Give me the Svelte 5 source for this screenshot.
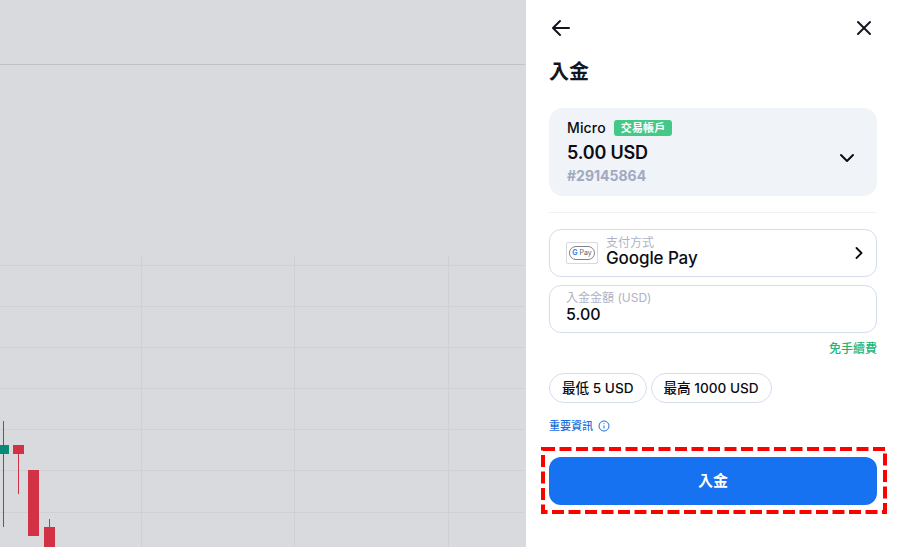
<script lang="ts">
  const hLines = [265, 306, 347, 388, 429, 470, 512];
  const vLines = [141, 294, 448];
  const limits = ['最低 5 USD', '最高 1000 USD'];
</script>

<div class="page">
  <div class="chart">
    <svg width="525" height="547" viewBox="0 0 525 547" aria-hidden="true">
      <line x1="0" y1="64.5" x2="525" y2="64.5" class="edge" />
      {#each hLines as y}
        <line x1="0" y1={y + 0.5} x2="525" y2={y + 0.5} class="grid" />
      {/each}
      {#each vLines as x}
        <line x1={x + 0.5} y1="256" x2={x + 0.5} y2="547" class="grid" />
      {/each}
      <rect x="3" y="421" width="1" height="106" fill="#0e7f73" />
      <rect x="0" y="445" width="9" height="9" fill="#0a8a76" />
      <rect x="13" y="445" width="11" height="9" fill="#d13246" />
      <rect x="18" y="454" width="1" height="40" fill="#d13246" />
      <rect x="28" y="470" width="11" height="66" fill="#d13246" />
      <rect x="49" y="519" width="1" height="8" fill="#d13246" />
      <rect x="44" y="527" width="11" height="20" fill="#d13246" />
    </svg>
  </div>

  <aside class="panel">
    <header class="nav">
      <svg class="icon" width="24" height="24" viewBox="0 0 24 24" fill="none" stroke="#14161f" stroke-width="2" stroke-linecap="round" stroke-linejoin="round" aria-hidden="true"><path d="M20 12H5"/><path d="M11 5l-7 7 7 7"/></svg>
      <svg class="icon" width="24" height="24" viewBox="0 0 24 24" fill="none" stroke="#14161f" stroke-width="2" stroke-linecap="round" aria-hidden="true"><path d="M6 6l12 12"/><path d="M18 6L6 18"/></svg>
    </header>

    <h1>入金</h1>

    <section class="account">
      <div class="account-info">
        <div class="account-name">Micro <span class="tag">交易帳戶</span></div>
        <div class="balance">5.00 USD</div>
        <div class="account-id">#29145864</div>
      </div>
      <svg width="18" height="18" viewBox="0 0 18 18" fill="none" stroke="#0b0d14" stroke-width="2" stroke-linecap="round" stroke-linejoin="round" aria-hidden="true"><path d="M3 6l6 6 6-6"/></svg>
    </section>

    <div class="divider"></div>

    <button type="button" class="field method">
      <span class="gpay">
        <span class="gpay-pill"><span class="g">G</span> Pay</span>
      </span>
      <span class="field-text">
        <span class="label">支付方式</span>
        <span class="value wide">Google Pay</span>
      </span>
      <svg width="16" height="16" viewBox="0 0 16 16" fill="none" stroke="#0b0d14" stroke-width="1.8" stroke-linecap="round" stroke-linejoin="round" aria-hidden="true"><path d="M5.5 3L10.5 8 5.5 13"/></svg>
    </button>

    <div class="field amount">
      <span class="label">入金金額 (USD)</span>
      <span class="value">5.00</span>
    </div>

    <div class="fee">免手續費</div>

    <div class="limits">
      {#each limits as limit}
        <span class="limit">{limit}</span>
      {/each}
    </div>

    <div class="info">
      重要資訊
      <svg width="12" height="12" viewBox="0 0 12 12" fill="none" stroke="#1a6fe0" aria-hidden="true"><circle cx="6" cy="6" r="5"/><path d="M6 5.5v3M6 3.2v1"/></svg>
    </div>

    <div class="submit-wrap">
      <button type="button" class="submit">入金</button>
      <svg class="highlight" width="346" height="67" viewBox="0 0 346 67" aria-hidden="true">
        <rect x="2" y="2" width="342" height="63" fill="none" stroke="#f00" stroke-width="4" stroke-dasharray="12 4.5" />
      </svg>
    </div>
  </aside>
</div>

<style>
  :global(body) {
    margin: 0;
    background: #fff;
  }
  .page {
    display: flex;
    width: 900px;
    height: 547px;
    overflow: hidden;
    font-family: Inter, "Noto Sans CJK TC", sans-serif;
    color: #0b0d14;
  }
  .chart {
    flex: 0 0 526px;
    height: 547px;
    background: #d9dadd;
  }
  .chart svg {
    display: block;
  }
  .edge {
    stroke: #bfc3c9;
  }
  .grid {
    stroke: #cfd0d4;
  }
  .panel {
    flex: 1;
    min-width: 0;
    box-sizing: border-box;
    padding: 16px 23px 0;
    background: #fff;
    display: flex;
    flex-direction: column;
  }
  .nav {
    display: flex;
    justify-content: space-between;
    padding: 0 1px 0 0;
    height: 24px;
  }
  .icon {
    display: block;
  }
  h1 {
    margin: 20px 0 0;
    font-size: 20px;
    line-height: 24px;
    font-weight: 700;
    color: #14161f;
  }
  .account {
    margin-top: 24px;
    height: 88px;
    box-sizing: border-box;
    padding: 11px 21px 0 18px;
    background: #f0f3f8;
    border-radius: 14px;
    display: flex;
    align-items: center;
    justify-content: space-between;
  }
  .account-info {
    align-self: flex-start;
  }
  .account-name {
    display: flex;
    align-items: center;
    gap: 8px;
    font-size: 14px;
    line-height: 18px;
    font-weight: 500;
    letter-spacing: 0.15px;
  }
  .tag {
    background: #43c887;
    color: #fff;
    font-size: 11px;
    line-height: 16px;
    font-weight: 700;
    padding: 0 7px;
    border-radius: 3px;
  }
  .balance {
    margin-top: 4px;
    font-size: 18px;
    line-height: 24px;
    font-weight: 600;
    letter-spacing: -0.2px;
  }
  .account-id {
    margin-top: 2px;
    font-size: 14px;
    line-height: 18px;
    font-weight: 700;
    color: #a1a9bf;
  }
  .divider {
    margin-top: 16px;
    height: 1px;
    background: #f0f2f6;
  }
  .field {
    box-sizing: border-box;
    height: 48px;
    width: 100%;
    background: #fff;
    border: 1px solid #d5ddec;
    border-radius: 12px;
    font-family: inherit;
    color: inherit;
    text-align: left;
  }
  .method {
    margin-top: 16px;
    padding: 0 9px 0 16px;
    display: flex;
    align-items: center;
    gap: 8px;
  }
  .gpay {
    flex: none;
    box-sizing: border-box;
    width: 32px;
    height: 22px;
    border: 1px solid #d8d9de;
    border-radius: 2px;
    display: flex;
    align-items: center;
    justify-content: center;
  }
  .gpay-pill {
    box-sizing: border-box;
    width: 26px;
    height: 14px;
    border: 1px solid #80838a;
    border-radius: 7px;
    font-size: 7px;
    line-height: 12px;
    text-align: center;
    color: #5f6368;
    white-space: nowrap;
  }
  .g {
    color: #3f83ea;
    font-weight: 700;
  }
  .field-text {
    flex: 1;
    display: flex;
    flex-direction: column;
    padding-bottom: 4px;
  }
  .label {
    font-size: 12px;
    line-height: 14px;
    color: #adb3c6;
  }
  .value {
    font-size: 16px;
    line-height: 18px;
    font-weight: 500;
  }
  .value.wide {
    font-size: 17px;
    line-height: 16px;
    letter-spacing: -0.1px;
  }
  .amount {
    margin-top: 8px;
    padding: 5px 16px 0;
    display: flex;
    flex-direction: column;
  }
  .fee {
    margin-top: 8px;
    text-align: right;
    font-size: 12px;
    line-height: 16px;
    font-weight: 500;
    color: #22b573;
  }
  .limits {
    margin-top: 16px;
    display: flex;
    gap: 4px;
  }
  .limit {
    box-sizing: border-box;
    height: 30px;
    padding: 0 12px 2px;
    border: 1px solid #d5ddec;
    border-radius: 15px;
    display: flex;
    align-items: center;
    font-size: 13.6px;
    font-weight: 500;
  }
  .info {
    margin-top: 15px;
    display: flex;
    align-items: center;
    gap: 5px;
    font-size: 11px;
    line-height: 16px;
    font-weight: 500;
    color: #1a6fe0;
  }
  .submit-wrap {
    position: relative;
    margin-top: 23px;
  }
  .submit {
    display: block;
    width: 100%;
    height: 48px;
    padding: 0 0 4px;
    border: 0;
    border-radius: 12px;
    background: #1672f0;
    color: #fff;
    font-family: inherit;
    font-size: 15px;
    font-weight: 700;
  }
  .highlight {
    position: absolute;
    left: -8px;
    top: -10px;
    pointer-events: none;
  }
</style>
